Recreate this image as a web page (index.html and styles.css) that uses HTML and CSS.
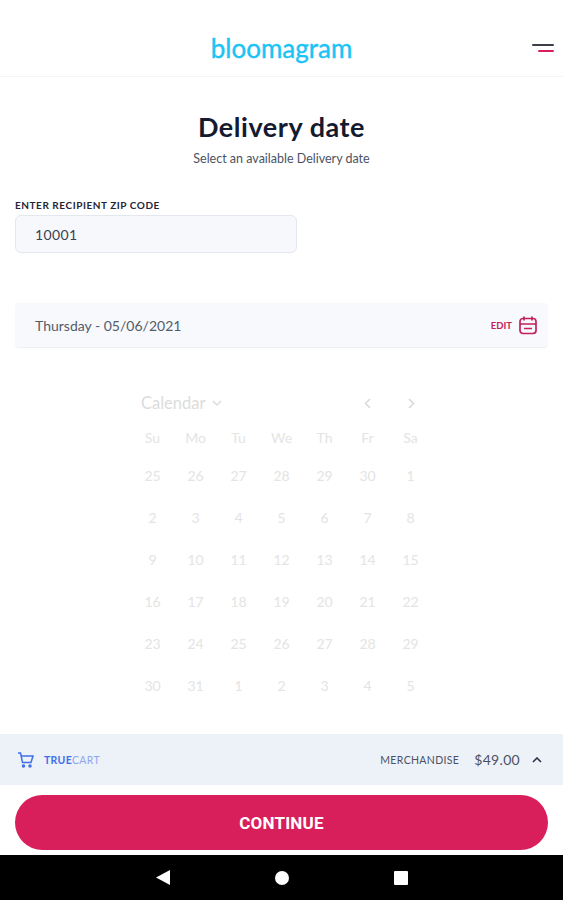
FILE: index.html
```html
<!DOCTYPE html>
<html lang="en">
<head>
  <meta charset="UTF-8">
  <title>Delivery date</title>
  <link rel="stylesheet" href="styles.css">
</head>
<body>
  <div id="app">
    <header class="topbar">
      <span class="logo">bloomagram</span>
      <span class="menu"><i class="menu-top"></i><i class="menu-bottom"></i></span>
    </header>

    <main class="content">
      <h1>Delivery date</h1>
      <p class="subtitle">Select an available Delivery date</p>

      <label class="zip-label">ENTER RECIPIENT ZIP CODE</label>
      <div class="zip-input">10001</div>

      <div class="date-bar">
        <span>Thursday - 05/06/2021</span>
        <span class="edit">EDIT
          <svg width="20" height="20" viewBox="0 0 20 20" fill="none" stroke="#c2215a" stroke-width="1.7">
            <rect x="2" y="3.5" width="16" height="15" rx="3"/>
            <path d="M2 9h16M6 1.5v4M14 1.5v4M6 13.5h8" />
          </svg>
        </span>
      </div>

      <section class="calendar">
        <div class="cal-head">
          <span class="cal-title">Calendar
            <svg width="10" height="6" viewBox="0 0 10 6" fill="none" stroke="#dcdcdc" stroke-width="1.5"><path d="M1 1l4 4 4-4"/></svg>
          </span>
          <span class="cal-arrows">
            <svg width="7" height="11" viewBox="0 0 7 11" fill="none" stroke="#d8d8d8" stroke-width="1.5"><path d="M6 1L1.5 5.500 6 10"/></svg>
            <svg width="7" height="11" viewBox="0 0 7 11" fill="none" stroke="#d8d8d8" stroke-width="1.5"><path d="M1 1l4.500 4.500L1 10"/></svg>
          </span>
        </div>
        <div class="cal-days">
          <span>Su</span><span>Mo</span><span>Tu</span><span>We</span><span>Th</span><span>Fr</span><span>Sa</span>
        </div>
        <div class="cal-grid">
          <span>25</span><span>26</span><span>27</span><span>28</span><span>29</span><span>30</span><span>1</span>
          <span>2</span><span>3</span><span>4</span><span>5</span><span>6</span><span>7</span><span>8</span>
          <span>9</span><span>10</span><span>11</span><span>12</span><span>13</span><span>14</span><span>15</span>
          <span>16</span><span>17</span><span>18</span><span>19</span><span>20</span><span>21</span><span>22</span>
          <span>23</span><span>24</span><span>25</span><span>26</span><span>27</span><span>28</span><span>29</span>
          <span>30</span><span>31</span><span>1</span><span>2</span><span>3</span><span>4</span><span>5</span>
        </div>
      </section>
    </main>

    <div class="cart-bar">
      <span class="cart-left">
        <svg width="18" height="18" viewBox="0 0 18 18" fill="none" stroke="#3f6fe8" stroke-width="1.5">
          <path d="M1 2h2.500l2 9.500h8.500l2-6.500H4.200"/>
          <circle cx="6.500" cy="15" r="1" fill="#3f6fe8"/>
          <circle cx="13" cy="15" r="1" fill="#3f6fe8"/>
        </svg>
        <span class="truecart"><b>TRUE</b>CART</span>
      </span>
      <span class="cart-right">
        <span class="merch">MERCHANDISE</span>
        <span class="price">$49.00</span>
        <svg width="10" height="6" viewBox="0 0 10 6" fill="none" stroke="#2b3345" stroke-width="1.600"><path d="M1 5l4-4 4 4"/></svg>
      </span>
    </div>

    <div class="action">
      <button class="continue">CONTINUE</button>
    </div>

    <nav class="navbar">
      <svg width="14" height="15" viewBox="0 0 14 15"><path d="M14 0v15L0 7.500z" fill="#fff"/></svg>
      <svg width="14" height="14" viewBox="0 0 14 14"><circle cx="7" cy="7" r="7" fill="#fff"/></svg>
      <svg width="14" height="14" viewBox="0 0 14 14"><rect width="14" height="14" rx="1" fill="#fff"/></svg>
    </nav>
  </div>
</body>
</html>
```

FILE: styles.css
```css
* {
  box-sizing: border-box;
}

body {
  margin: 0;
  background: #fff;
  font-family: Lato, "Open Sans", sans-serif;
  color: #2b3345;
}

#app {
  width: 563px;
  height: 900px;
  display: flex;
  flex-direction: column;
  overflow: hidden;
}

/* Top bar */
.topbar {
  position: relative;
  height: 77px;
  flex: none;
  display: flex;
  align-items: center;
  justify-content: center;
  padding-top: 19px;
  border-bottom: 1px solid #f3f4f6;
}

.logo {
  font-family: Lato, sans-serif;
  font-size: 26px;
  font-weight: 400;
  -webkit-text-stroke: 0.4px #1cc3f4;
  color: #1cc3f4;
}

.menu {
  position: absolute;
  right: 9px;
  top: 44px;
  width: 22px;
  display: flex;
  flex-direction: column;
  align-items: flex-end;
  gap: 4px;
}

.menu i {
  display: block;
  height: 2px;
  border-radius: 1px;
}

.menu-top {
  width: 22px;
  background: #3b3f4a;
}

.menu-bottom {
  width: 16px;
  background: #d81f5b;
}

/* Main */
.content {
  flex: 1;
  padding: 0 15px;
  min-height: 0;
}

h1 {
  margin: 33px 0 0;
  font-size: 27px;
  line-height: 34px;
  font-weight: 700;
  letter-spacing: 0.55px;
  text-align: center;
  color: #141a30;
}

.subtitle {
  margin: 7px 0 0;
  font-size: 12.5px;
  line-height: 16px;
  text-align: center;
  color: #4b5263;
}

.zip-label {
  display: block;
  margin-top: 32px;
  font-size: 10px;
  line-height: 12px;
  font-weight: 700;
  letter-spacing: 0.55px;
  color: #1f2537;
}

.zip-input {
  width: 282px;
  height: 38px;
  margin-top: 4px;
  padding-left: 19px;
  display: flex;
  align-items: center;
  font-size: 14px;
  letter-spacing: 0.4px;
  background: #f6f8fb;
  border: 1px solid #e4e7ee;
  border-radius: 6px;
  color: #3a4152;
}

.date-bar {
  height: 45px;
  margin-top: 50px;
  padding: 0 10px 0 20px;
  display: flex;
  align-items: center;
  justify-content: space-between;
  font-size: 14px;
  background: #f7f9fc;
  border-bottom: 1px solid #eef0f4;
  border-radius: 4px;
  color: #545b6b;
}

.edit {
  display: flex;
  align-items: center;
  gap: 6px;
  font-size: 9.500px;
  font-weight: 700;
  color: #c2215a;
}

/* Calendar */
.calendar {
  width: 301px;
  margin: 44px 0 0 116px;
  color: #e4e4e4;
}

.cal-head {
  height: 22px;
  display: flex;
  align-items: center;
  justify-content: space-between;
  padding: 0 2px 0 10px;
}

.cal-title {
  display: flex;
  align-items: center;
  gap: 7px;
  font-size: 16.500px;
  color: #dcdcdc;
}

.cal-arrows {
  display: flex;
  gap: 37px;
  margin-right: 15px;
}

.cal-days,
.cal-grid {
  display: grid;
  grid-template-columns: repeat(7, 43px);
  text-align: center;
  font-size: 14px;
}

.cal-days {
  margin-top: 15px;
  line-height: 18px;
}

.cal-grid {
  margin-top: 7px;
  grid-auto-rows: 42px;
  align-items: center;
}

/* Cart bar */
.cart-bar {
  height: 51px;
  flex: none;
  display: flex;
  align-items: center;
  justify-content: space-between;
  padding: 0 21px 0 17px;
  background: #edf1f8;
}

.cart-left,
.cart-right {
  display: flex;
  align-items: center;
}

.cart-left {
  gap: 9px;
}

.truecart {
  font-size: 10.500px;
  letter-spacing: 0.3px;
  color: #8ea6ef;
}

.truecart b {
  color: #3f6fe8;
}

.merch {
  font-size: 10.500px;
  letter-spacing: 0.35px;
  color: #4b5263;
}

.price {
  margin: 0 12px 0 15px;
  font-size: 14px;
  letter-spacing: 0.3px;
  color: #4b5263;
}

.action {
  height: 70px;
  flex: none;
  padding: 10px 15px 5px;
  background: #fff;
}

.continue {
  display: block;
  width: 100%;
  height: 55px;
  border: none;
  border-radius: 28px;
  background: #d81f5b;
  color: #fff;
  font-family: Roboto, sans-serif;
  font-size: 17px;
  font-weight: 700;
  letter-spacing: 0.2px;
}

/* Android nav */
.navbar {
  height: 45px;
  flex: none;
  background: #000;
  display: flex;
  align-items: center;
  justify-content: center;
  gap: 105px;
}
```
